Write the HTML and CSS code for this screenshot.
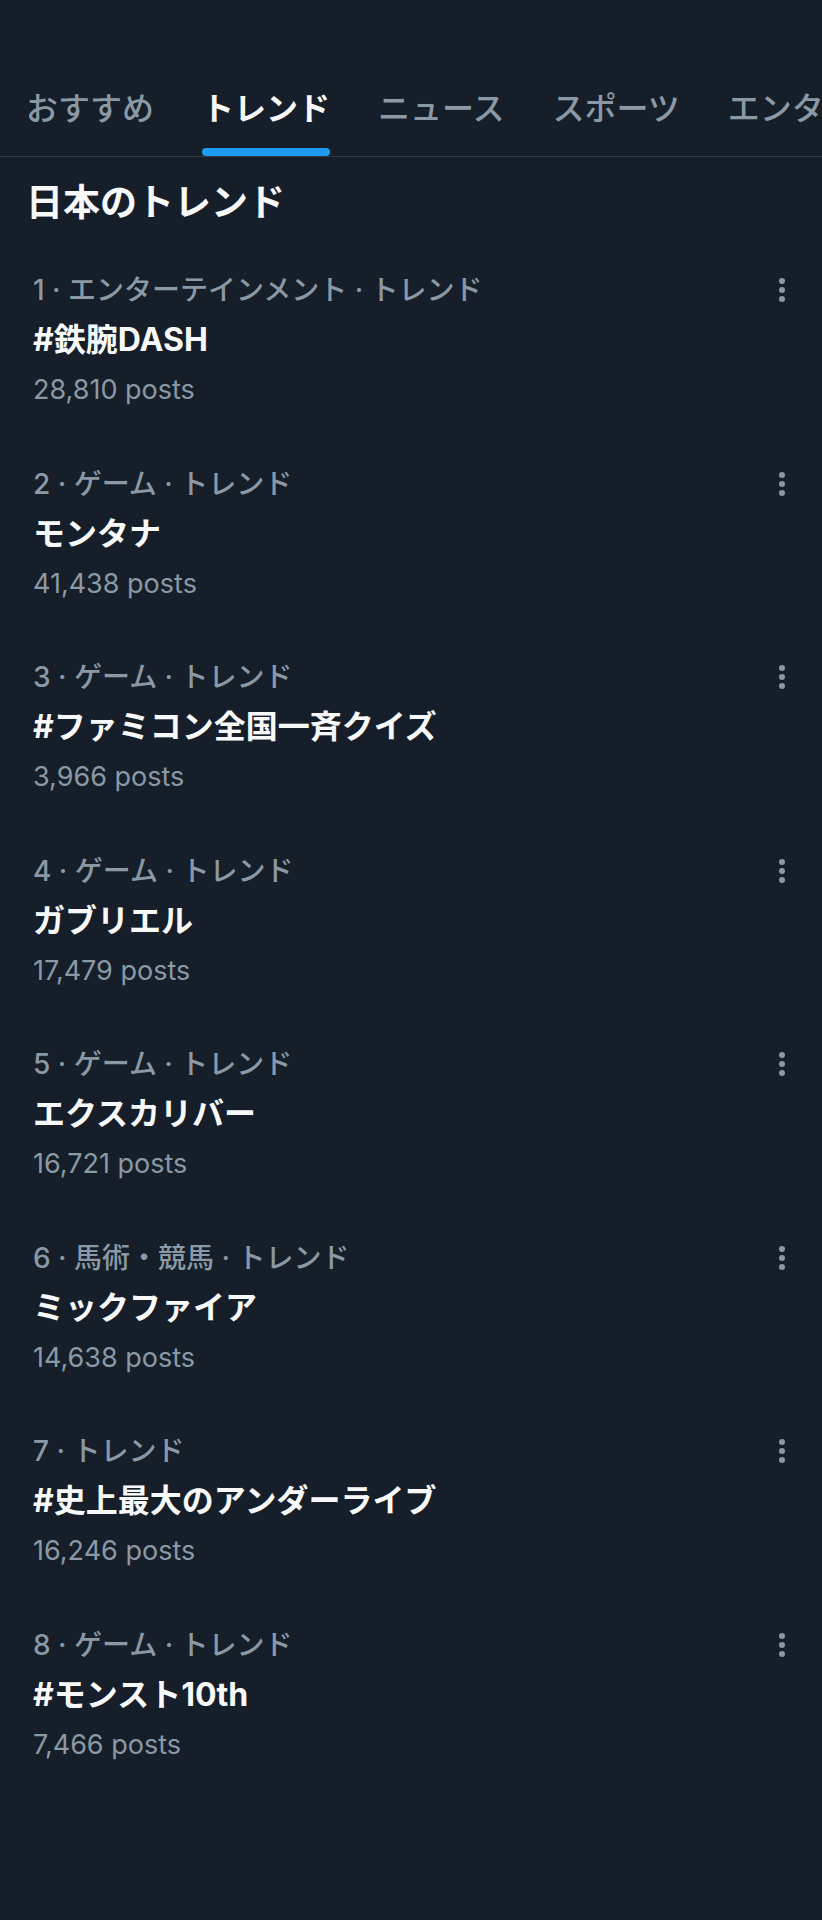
FILE: index.html
```html
<!DOCTYPE html>
<html lang="ja">
<head>
    <meta charset="UTF-8">
    <meta name="viewport" content="width=device-width, initial-scale=1.0">
    <title>トレンド</title>
    <link rel="stylesheet" href="styles.css">
</head>
<body>
    <!-- タブ -->
    <nav class="tabbar">
        <div class="tab"><span class="tab-label">おすすめ</span></div>
        <div class="tab active"><span class="tab-label">トレンド</span><span class="tab-bar"></span></div>
        <div class="tab"><span class="tab-label">ニュース</span></div>
        <div class="tab"><span class="tab-label">スポーツ</span></div>
        <div class="tab"><span class="tab-label">エンタメ</span></div>
    </nav>

    <h1 class="section-title">日本のトレンド</h1>

    <ul class="trend-list">
        <li class="trend">
            <div class="trend-body">
                <div class="trend-meta">1 · エンターテインメント · トレンド</div>
                <div class="trend-name">#鉄腕DASH</div>
                <div class="trend-count">28,810 posts</div>
            </div>
            <svg class="more" width="24" height="26" viewBox="0 0 24 26"><circle cx="12" cy="4" r="3"/><circle cx="12" cy="13" r="3"/><circle cx="12" cy="22" r="3"/></svg>
        </li>
        <li class="trend">
            <div class="trend-body">
                <div class="trend-meta">2 · ゲーム · トレンド</div>
                <div class="trend-name">モンタナ</div>
                <div class="trend-count">41,438 posts</div>
            </div>
            <svg class="more" width="24" height="26" viewBox="0 0 24 26"><circle cx="12" cy="4" r="3"/><circle cx="12" cy="13" r="3"/><circle cx="12" cy="22" r="3"/></svg>
        </li>
        <li class="trend">
            <div class="trend-body">
                <div class="trend-meta">3 · ゲーム · トレンド</div>
                <div class="trend-name">#ファミコン全国一斉クイズ</div>
                <div class="trend-count">3,966 posts</div>
            </div>
            <svg class="more" width="24" height="26" viewBox="0 0 24 26"><circle cx="12" cy="4" r="3"/><circle cx="12" cy="13" r="3"/><circle cx="12" cy="22" r="3"/></svg>
        </li>
        <li class="trend">
            <div class="trend-body">
                <div class="trend-meta">4 · ゲーム · トレンド</div>
                <div class="trend-name">ガブリエル</div>
                <div class="trend-count">17,479 posts</div>
            </div>
            <svg class="more" width="24" height="26" viewBox="0 0 24 26"><circle cx="12" cy="4" r="3"/><circle cx="12" cy="13" r="3"/><circle cx="12" cy="22" r="3"/></svg>
        </li>
        <li class="trend">
            <div class="trend-body">
                <div class="trend-meta">5 · ゲーム · トレンド</div>
                <div class="trend-name">エクスカリバー</div>
                <div class="trend-count">16,721 posts</div>
            </div>
            <svg class="more" width="24" height="26" viewBox="0 0 24 26"><circle cx="12" cy="4" r="3"/><circle cx="12" cy="13" r="3"/><circle cx="12" cy="22" r="3"/></svg>
        </li>
        <li class="trend">
            <div class="trend-body">
                <div class="trend-meta">6 · 馬術・競馬 · トレンド</div>
                <div class="trend-name">ミックファイア</div>
                <div class="trend-count">14,638 posts</div>
            </div>
            <svg class="more" width="24" height="26" viewBox="0 0 24 26"><circle cx="12" cy="4" r="3"/><circle cx="12" cy="13" r="3"/><circle cx="12" cy="22" r="3"/></svg>
        </li>
        <li class="trend">
            <div class="trend-body">
                <div class="trend-meta">7 · トレンド</div>
                <div class="trend-name">#史上最大のアンダーライブ</div>
                <div class="trend-count">16,246 posts</div>
            </div>
            <svg class="more" width="24" height="26" viewBox="0 0 24 26"><circle cx="12" cy="4" r="3"/><circle cx="12" cy="13" r="3"/><circle cx="12" cy="22" r="3"/></svg>
        </li>
        <li class="trend">
            <div class="trend-body">
                <div class="trend-meta">8 · ゲーム · トレンド</div>
                <div class="trend-name">#モンスト10th</div>
                <div class="trend-count">7,466 posts</div>
            </div>
            <svg class="more" width="24" height="26" viewBox="0 0 24 26"><circle cx="12" cy="4" r="3"/><circle cx="12" cy="13" r="3"/><circle cx="12" cy="22" r="3"/></svg>
        </li>
    </ul>
</body>
</html>
```

FILE: styles.css
```css
body {
    font-family: "Inter", "Noto Sans CJK JP", sans-serif;
    background-color: #161f29;
    color: #f7f9f9;
    margin: 0;
    padding: 0;
    overflow-x: hidden;
}

.tabbar {
    display: flex;
    gap: 48px;
    height: 156px;
    padding-left: 26px;
    border-bottom: 1px solid #2f3a45;
    white-space: nowrap;
    overflow: hidden;
}

.tab {
    display: flex;
    flex-direction: column;
    justify-content: flex-end;
    align-items: stretch;
}

.tab-label {
    font-size: 32px;
    font-weight: 500;
    line-height: 50px;
    color: #8b98a5;
    margin-bottom: 22px;
}

.tab.active .tab-label {
    color: #f7f9f9;
    font-weight: 700;
    margin-bottom: 14px;
}

.tab-bar {
    height: 8px;
    border-radius: 4px;
    background-color: #1d9bf0;
}

.section-title {
    font-size: 37px;
    font-weight: 700;
    line-height: 50px;
    margin: 21px 0 0;
    padding-left: 26px;
}

.trend-list {
    list-style: none;
    margin: 15px 0 0;
    padding: 0;
}

.trend {
    display: flex;
    justify-content: space-between;
    align-items: flex-start;
    padding: 22px 28px 21.5px 33px;
}

.trend-meta {
    font-size: 28px;
    font-weight: 500;
    line-height: 50px;
    color: #8b98a5;
}

.trend-name {
    font-size: 32px;
    font-weight: 700;
    line-height: 50px;
    color: #f7f9f9;
}

.trend-count {
    font-size: 27px;
    line-height: 50px;
    color: #8b98a5;
}

.more {
    margin-top: 12px;
    fill: #8b98a5;
}
```
